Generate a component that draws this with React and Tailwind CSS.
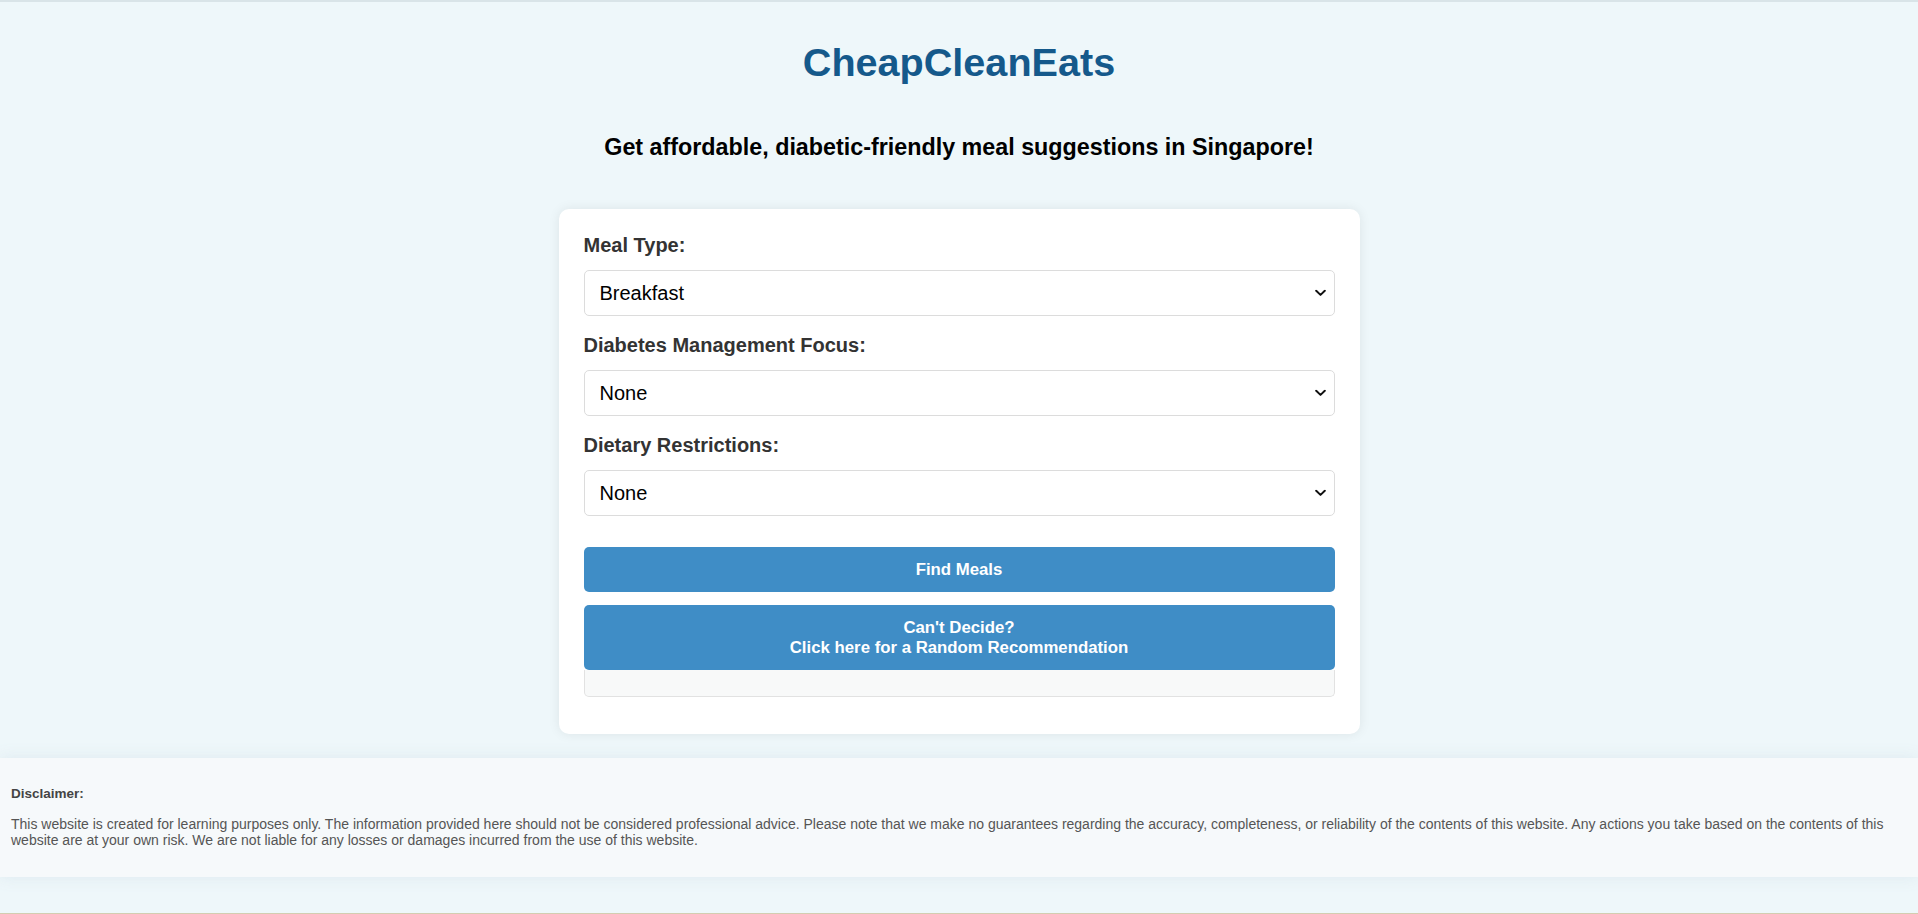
import React from "react";

function Chevron() {
  return (
    <svg className="pointer-events-none absolute right-[9px] top-1/2 -translate-y-1/2" width="11" height="7" viewBox="0 0 11 7" fill="none">
      <path d="M1.2 1.2 L5.5 5.4 L9.8 1.2" stroke="#111" strokeWidth="2" strokeLinecap="round" strokeLinejoin="round" />
    </svg>
  );
}

function Field({ label, value, last }) {
  return (
    <div>
      <label className="block text-[20px] leading-[23px] font-bold text-[#333] mb-[13px]">{label}</label>
      <div className={"relative " + (last ? "" : "mb-[18px]")}>
        <select
          defaultValue={value}
          className="appearance-none block w-full h-[46px] rounded-[5px] border border-[#dcdcdc] bg-white pl-[15px] pr-8 text-[20px] text-black outline-none"
          style={{ fontFamily: "'Liberation Sans', Arial, sans-serif" }}
        >
          <option>{value}</option>
        </select>
        <Chevron />
      </div>
    </div>
  );
}

export default function App() {
  return (
    <div
      className="h-[914px] w-full bg-[#eef7fa] border-t-2 border-[#d9e4e8] border-b border-b-[#d3cdb0] flex flex-col overflow-hidden"
      style={{ fontFamily: "'Liberation Sans', Arial, sans-serif" }}
    >
      <h1 className="mt-[38px] text-center text-[39.6px] leading-[45px] font-bold text-[#15598b]">CheapCleanEats</h1>
      <p className="mt-[49px] text-center text-[23.3px] leading-[27px] font-bold text-black">
        Get affordable, diabetic-friendly meal suggestions in Singapore!
      </p>
      <div className="mx-auto mt-[48px] w-[801px] rounded-[10px] bg-white p-[25px] shadow-[0_0_12px_rgba(0,0,0,0.08)]">
        <Field label="Meal Type:" value="Breakfast" />
        <Field label="Diabetes Management Focus:" value="None" />
        <Field label="Dietary Restrictions:" value="None" last />
        <button className="mt-[31px] flex h-[45px] w-full items-center justify-center rounded-[5px] bg-[#3f8dc6] text-[16.8px] leading-[20px] font-bold text-white">
          Find Meals
        </button>
        <button className="mt-[13px] flex h-[65px] w-full flex-col items-center justify-center rounded-[5px] bg-[#3f8dc6] text-[16.8px] leading-[20px] font-bold text-white">
          <span>Can't Decide?</span>
          <span>Click here for a Random Recommendation</span>
        </button>
        <div className="h-[27px] w-full rounded-b-[5px] border border-t-0 border-[#e2e2e2] bg-[#f8f9f9] mb-[12px]" />
      </div>
      <footer className="mt-[24px] h-[119px] bg-[#f6f9fb] px-[11px] pt-[28px] shadow-[0_0_14px_rgba(220,232,238,0.9)]">
        <h4 className="text-[13.5px] leading-[16px] font-bold text-[#444]">Disclaimer:</h4>
        <p className="mt-[14px] text-[14px] leading-[16px] text-[#555]">
          This website is created for learning purposes only. The information provided here should not be considered professional advice. Please note that we make no guarantees regarding the accuracy, completeness, or reliability of the contents of this website. Any actions you take based on the contents of this website are at your own risk. We are not liable for any losses or damages incurred from the use of this website.
        </p>
      </footer>
    </div>
  );
}
